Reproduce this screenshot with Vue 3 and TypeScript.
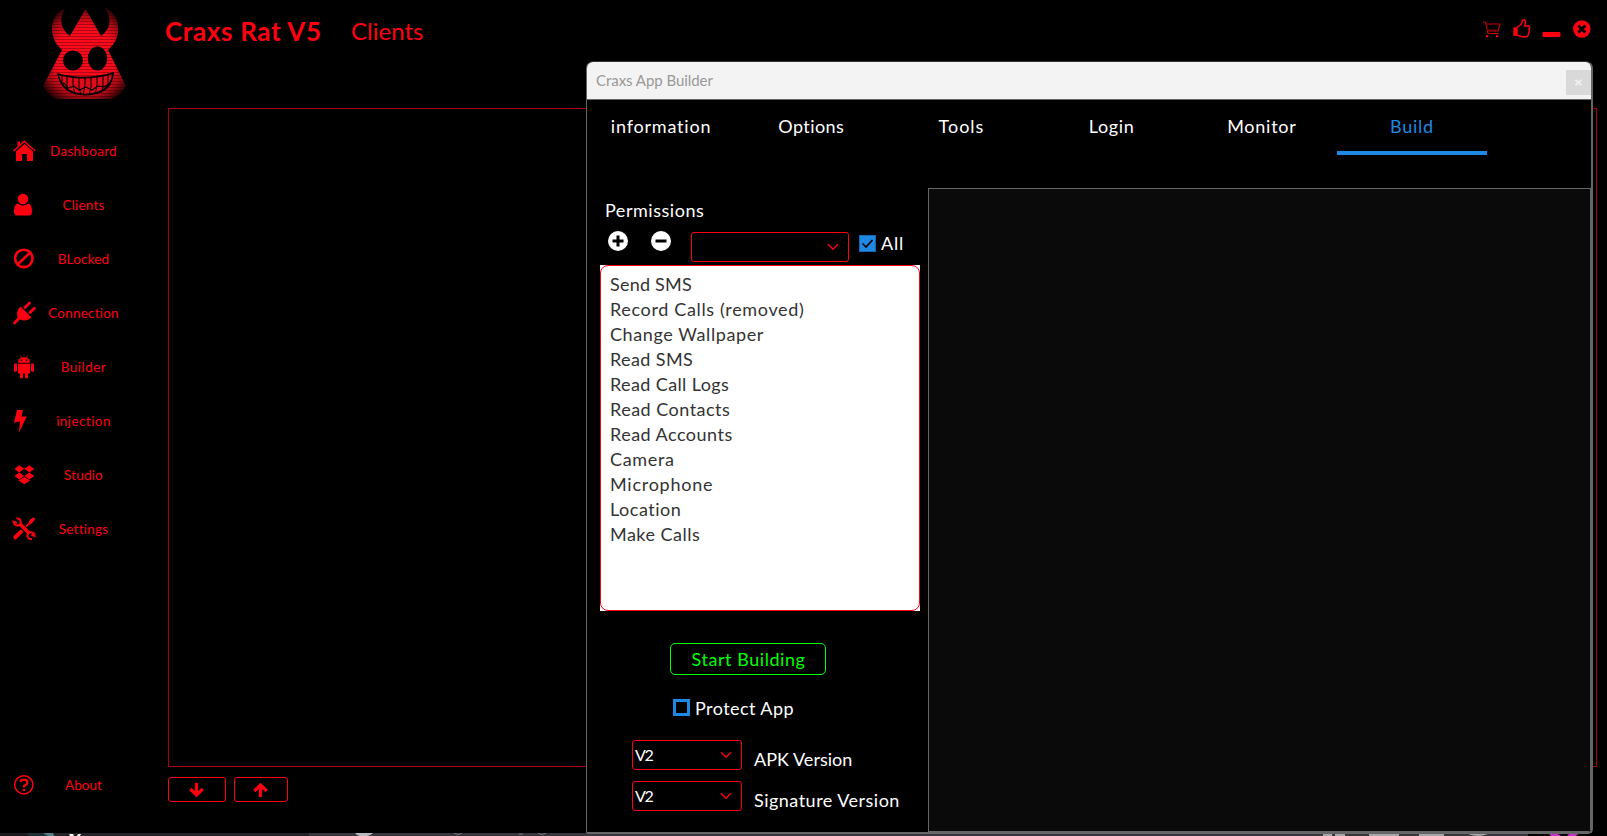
<script setup lang="ts">
interface Label { text: string; w: number }
interface NavItem extends Label { icon: string }

const ctx = document.createElement('canvas').getContext('2d')!

// Letter spacing that makes a label's ink span the given width.
function fit(text: string, width: number, size = 18, weight = 400) {
  ctx.font = `${weight} ${size}px Lato`
  const m = ctx.measureText(text)
  const ink = m.actualBoundingBoxLeft + m.actualBoundingBoxRight
  return { letterSpacing: `${((width - ink) / (text.length - 1)).toFixed(3)}px` }
}

const nav: NavItem[] = [
  { text: 'Dashboard', w: 65, icon: 'home' },
  { text: 'Clients', w: 42, icon: 'user' },
  { text: 'BLocked', w: 50, icon: 'ban' },
  { text: 'Connection', w: 70, icon: 'plug' },
  { text: 'Builder', w: 44, icon: 'android' },
  { text: 'injection', w: 54, icon: 'bolt' },
  { text: 'Studio', w: 39, icon: 'box' },
  { text: 'Settings', w: 49, icon: 'tools' },
]
const tabs: Label[] = [
  { text: 'information', w: 98 },
  { text: 'Options', w: 66 },
  { text: 'Tools', w: 45 },
  { text: 'Login', w: 43 },
  { text: 'Monitor', w: 68 },
  { text: 'Build', w: 41 },
]
const permissions: Label[] = [
  { text: 'Send SMS', w: 81 },
  { text: 'Record Calls (removed)', w: 192 },
  { text: 'Change Wallpaper', w: 154 },
  { text: 'Read SMS', w: 81 },
  { text: 'Read Call Logs', w: 118 },
  { text: 'Read Contacts', w: 119 },
  { text: 'Read Accounts', w: 122 },
  { text: 'Camera', w: 63 },
  { text: 'Microphone', w: 101 },
  { text: 'Location', w: 69 },
  { text: 'Make Calls', w: 89 },
]
const versions: Label[] = [
  { text: 'APK Version', w: 98 },
  { text: 'Signature Version', w: 145 },
]
const teeth = [62, 67, 73, 79, 85, 91, 97, 103, 108]
</script>

<template>
  <div class="desktop">
    <aside class="side">
      <svg class="logo" width="86" height="94" viewBox="41 7 86 94">
        <defs>
          <radialGradient id="glow" gradientUnits="userSpaceOnUse" cx="85" cy="56" r="52">
            <stop offset="0" stop-color="#ff0a1c" />
            <stop offset=".58" stop-color="#fa0a1c" />
            <stop offset=".8" stop-color="#a80914" />
            <stop offset="1" stop-color="#280205" />
          </radialGradient>
          <pattern id="scan" width="86" height="3" patternUnits="userSpaceOnUse">
            <rect width="86" height="1" fill="#000" opacity=".3" />
          </pattern>
          <clipPath id="mouth"><path d="M57 73Q85 81 114 72Q113 95 85 95.500Q61 95 57 73Z" /></clipPath>
          <path id="head" d="M65 8C53 14 50 25 53 36C55 43 58 46 62 50L43 86Q47 95 56 99H112Q121 95 126 86L108 50C113 45 117 41 118 32C119 20 114 11 105 8C112 18 111 29 101 36L85.500 9L70 36C60 29 59 18 65 8Z" />
        </defs>
        <use href="#head" fill="url(#glow)" />
        <use href="#head" fill="url(#scan)" />
        <ellipse cx="73" cy="60.500" rx="10" ry="10" />
        <ellipse cx="97.500" cy="58.500" rx="9.700" ry="12" />
        <path d="M57 73Q85 81 114 72Q113 95 85 95.500Q61 95 57 73Z" />
        <path d="M59 75.500Q85 82 112 74.500Q109 93 85 93.700Q64 93 59 75.500Z" fill="#e00a1a" />
        <g clip-path="url(#mouth)" fill="none" stroke="#000" stroke-width="1.100">
          <path d="M60 84L64 83L68 88L74 86L79 90L86 87L92 90L98 86L104 87L110 83" />
          <path v-for="(x, i) in teeth" :key="x" :d="`M${x} 75V${85 + (i % 2) * 2}L${x + (x < 85 ? 2 : -2)} 95`" />
        </g>
      </svg>

      <nav class="nav">
        <div v-for="n in nav" :key="n.text" class="nav-item">
          <svg class="nav-icon" width="24" height="24" viewBox="0 0 24 24">
            <g v-if="n.icon === 'home'">
              <path d="M1.500 12L12.300 2.200L23.200 12" fill="none" stroke="#ff0010" stroke-width="1.500" />
              <path d="M5.500 2.500H8V5.500L5.500 7.500ZM12.500 5L21 12.500V22H15V15H10V22H4V12.500Z" />
            </g>
            <g v-else-if="n.icon === 'user'">
              <circle cx="11" cy="6" r="5.300" />
              <path d="M5.500 10.500Q8 12.500 11 12.500T16.500 10.500Q20 11.500 20 18.500Q20 22.500 17 22.500H5Q2 22.500 2 18.500Q2 11.500 5.500 10.500Z" />
            </g>
            <g v-else-if="n.icon === 'ban'" fill="none" stroke="#ff0010" stroke-width="2.600">
              <circle cx="11.800" cy="11.400" r="8.700" /><path d="M6 17L18 5.700" />
            </g>
            <g v-else-if="n.icon === 'plug'">
              <path d="M2.500 22L6.500 17.800M13 6.500L17.500 2M18 11.500L22.300 7.200" stroke="#ff0010" stroke-width="2.800" stroke-linecap="round" />
              <path d="M8.500 5.500L19.500 16.500Q14 21 8.500 18.800L6 17.500Q3 11 8.500 5.500Z" />
            </g>
            <g v-else-if="n.icon === 'android'">
              <path d="M6 7.800Q6.200 4 9 2.800L7.900 1L8.400 .8L9.600 2.600Q12 1.900 14.400 2.600L15.600 .8L16.100 1L15 2.800Q17.800 4 18 7.800ZM6 8.700H18V18.500H16V22.200Q16 23.500 14.500 23.500T13 22.200V18.500H11V22.200Q11 23.500 9.500 23.500T8 22.200V18.500H6Z" />
              <rect x="2" y="8.300" width="3" height="8.500" rx="1.500" /><rect x="19" y="8.300" width="3" height="8.500" rx="1.500" />
              <circle cx="9.300" cy="5.300" r=".7" fill="#000" /><circle cx="14.700" cy="5.300" r=".7" fill="#000" />
            </g>
            <path v-else-if="n.icon === 'bolt'" d="M5 1H11L9.500 7.500H14.800L6.800 24L8 12.500L2 13.800Z" />
            <path v-else-if="n.icon === 'box'" d="M7.300 2.300L12.200 5.700L7.300 9.500L2.500 6ZM17.300 2.300L22.200 6L17.300 9.500L12.500 5.700ZM7.300 9.500L12.100 13L7.300 16.500L2.500 13ZM17.300 9.500L22.200 13L17.300 16.500L12.600 13ZM12.300 14L18.200 17.500L12.300 21.300L6.500 17.500Z" />
            <g v-else fill="none" stroke="#ff0010">
              <path d="M3.300 20.300L9 14.800" stroke-width="4" stroke-linecap="round" />
              <path d="M14 9.500L19 5" stroke-width="1.800" />
              <path d="M18.600 5L21.200 2.300" stroke-width="3.400" stroke-linecap="round" />
              <path d="M7.500 6.500L17.500 16.500" stroke-width="3.600" />
              <path d="M4.500 1.600Q8.700 1.200 8.700 5.200Q8.500 8.700 5.300 8.500Q2.300 8.300 1.700 4.800L5 5.800" stroke-width="2" />
              <path d="M20 22Q15.200 22.300 15.400 18.300Q15.800 15 19 15.200Q22.300 15.500 22.600 19L19.500 17.800" stroke-width="2" />
            </g>
          </svg>
          <span class="nav-text" :style="fit(n.text, n.w, 13.5)">{{ n.text }}</span>
        </div>
      </nav>

      <div class="nav-item about">
        <svg class="nav-icon" width="24" height="24" viewBox="0 0 24 24" fill="none" stroke="#ff0010">
          <circle cx="11.800" cy="11.800" r="9.100" stroke-width="1.500" />
          <path d="M8.600 9.100Q8.800 6.700 12 6.700T15.300 9.400Q15.300 11 13.500 11.800T11.800 14.500" stroke-width="2.200" />
          <path d="M10.700 16.900H13.100" stroke-width="2.200" />
        </svg>
        <span class="nav-text" :style="fit('About', 37, 13.5)">About</span>
      </div>
    </aside>

    <main class="main">
      <header class="head">
        <h1 :style="fit('Craxs Rat V5', 155, 26, 700)">Craxs Rat V5</h1>
        <h2 :style="fit('Clients', 71, 24)">Clients</h2>
        <svg class="sys" width="112" height="24" viewBox="1480 17 112 24">
          <g fill="none" stroke="#c0000c" stroke-width="1.100">
            <path d="M1483 22H1485.500L1488 33.500H1499M1486 24H1500L1498 31H1487.500" />
            <path d="M1487 30.300H1498" stroke="#7c0007" stroke-width="1.600" />
          </g>
          <path d="M1486 35.300h2.200v2h-2.200zM1496 35.300h2.200v2h-2.200z" fill="#ff0010" />
          <path d="M1517 27.500L1521 24.500Q1522.300 23 1522.200 20.500Q1524 18.800 1525.500 21Q1526 23 1524.500 26H1528.500Q1530.200 26.300 1529.200 29L1529.500 31L1528.500 34Q1528 37 1525 37Q1521 37 1517 35Z" fill="none" stroke="#ff0010" stroke-width="1.500" stroke-linejoin="round" />
          <path d="M1513.300 27.500H1517V35.800H1513.300Z" fill="#ff0010" />
          <rect x="1542.500" y="32" width="18" height="5" rx="1" fill="#ff0010" />
          <circle cx="1581.800" cy="29" r="8.700" fill="#ff0010" />
          <path d="M1578.300 25.500L1585.300 32.500M1585.300 25.500L1578.300 32.500" stroke="#000" stroke-width="2.800" />
        </svg>
      </header>
      <section class="list"></section>
      <footer class="foot">
        <button class="arrow down">
          <svg width="18" height="18" viewBox="0 0 18 18"><path d="M8.500 2V14M2.300 8L8.500 14L14.700 8" /></svg>
        </button>
        <button class="arrow up">
          <svg width="18" height="18" viewBox="0 0 18 18"><path d="M8.500 16V4M2.300 10L8.500 4L14.700 10" /></svg>
        </button>
      </footer>
    </main>

    <svg class="strip" width="1607" height="3" viewBox="0 0 1607 3">
      <rect width="1528" height="3" fill="#35353b" />
      <rect width="309" height="3" fill="#232327" />
      <rect width="28" height="3" fill="#1b1b1e" />
      <path d="M26 0H53L55 3H30Z" fill="#1f2f36" /><path d="M43 0H53L54 3H48Z" fill="#527e88" />
      <path d="M69 1H73L74 3H70ZM78 1H81L80 3H77Z" fill="#f0eee8" />
      <path d="M355 0H373Q370 3 367 3H360Q357 3 355 0Z" fill="#b9b9c2" />
      <path d="M454 0Q458 3 462 0M538 0Q542 3 546 0M519 1H523" fill="none" stroke="#77777f" />
      <path d="M1323 1h9v2h-9zM1335 1h10v2h-10zM1369 1h30v2h-30zM1419 1h25v2h-25zM1468 1Q1478 5 1488 1V0H1468Z" fill="#a5a5aa" />
      <path d="M1549 1H1558L1561 3H1551ZM1569 1H1578L1576 3H1567Z" fill="#c92fd0" />
    </svg>

    <div class="window">
      <div class="titlebar">
        <span class="title" :style="fit('Craxs App Builder', 118, 15)">Craxs App Builder</span>
        <span class="close"><svg width="9" height="9" viewBox="0 0 9 9"><path d="M1.500 1.800L7.500 7.200M7.500 1.800L1.500 7.200" stroke="#f1f1f1" stroke-width="1.800" /></svg></span>
      </div>
      <div class="tabs">
        <div v-for="t in tabs" :key="t.text" class="tab" :class="{ active: t.text === 'Build' }">
          <span :style="fit(t.text, t.w)">{{ t.text }}</span>
        </div>
      </div>
      <div class="body">
        <div class="form">
          <div class="perm-title"><span :style="fit('Permissions', 98)">Permissions</span></div>
          <div class="perm-row">
            <svg class="round" width="20" height="20" viewBox="0 0 20 20"><circle cx="10" cy="10" r="10" fill="#fff" /><path d="M4.500 10H15.500M10 4.500V15.500" stroke="#000" stroke-width="3" /></svg>
            <svg class="round minus" width="20" height="20" viewBox="0 0 20 20"><circle cx="10" cy="10" r="10" fill="#fff" /><path d="M4.500 10H15.500" stroke="#000" stroke-width="3" /></svg>
            <div class="combo wide"><svg class="chev" width="12" height="8" viewBox="0 0 12 8"><path d="M1 1.200L6 6.200L11 1.200" /></svg></div>
            <svg class="check" width="17" height="17" viewBox="0 0 17 17"><rect x=".5" y=".5" width="16" height="16" fill="#1e88e5" stroke="#1565b0" /><path d="M3.500 8.500L7 12L13.500 5" fill="none" stroke="#000" stroke-width="1.700" /></svg>
            <span class="all" :style="fit('All', 21)">All</span>
          </div>
          <div class="listbox">
            <div class="listbox-in">
              <div v-for="p in permissions" :key="p.text" class="perm"><span :style="fit(p.text, p.w)">{{ p.text }}</span></div>
            </div>
          </div>
          <button class="start"><span :style="fit('Start Building', 113)">Start Building</span></button>
          <div class="protect">
            <span class="box"></span>
            <span :style="fit('Protect App', 98)">Protect App</span>
          </div>
          <div v-for="v in versions" :key="v.text" class="version">
            <div class="combo"><span class="val" :style="fit('V2', 18.500, 16)">V2</span><svg class="chev" width="12" height="8" viewBox="0 0 12 8"><path d="M1 1.200L6 6.200L11 1.200" /></svg></div>
            <span class="vlabel" :style="fit(v.text, v.w)">{{ v.text }}</span>
          </div>
        </div>
        <div class="output"></div>
      </div>
    </div>
  </div>
</template>

<style>
body { background: #000; overflow: hidden; }
</style>

<style scoped>
* { box-sizing: border-box; }
.desktop {
  position: relative;
  display: flex;
  width: 1607px;
  height: 836px;
  background: #000;
  overflow: hidden;
  font-family: Lato, "Liberation Sans", sans-serif;
  font-size: 18px;
  color: #fff;
  white-space: nowrap;
}
.desktop svg { display: block; flex: none; }
button { background: #000; padding: 0; font: inherit; }
.side { width: 168px; height: 833px; display: flex; flex-direction: column; padding-top: 7px; }
.logo { margin-left: 41px; }
.nav { margin-top: 23px; }
.nav-item { height: 54px; display: flex; align-items: center; color: #ff0010; }
.nav-icon { margin-left: 12px; fill: #ff0010; }
.about .nav-icon { fill: none; }
.nav-text { width: 95px; text-align: center; font-size: 13.5px; line-height: 20px; }
.about { margin-top: 202px; }
.main { flex: 1; display: flex; flex-direction: column; }
.head { height: 108px; display: flex; align-items: flex-start; color: #ff0010; }
h1 { width: 183px; margin: 16px 0 0 -3px; font-size: 26px; line-height: 30px; font-weight: 700; }
h2 { margin: 16px 0 0 3px; font-size: 24px; line-height: 30px; font-weight: 400; }
.sys { margin: 17px 15px 0 auto; }
.list { height: 659px; width: 1429px; border: 1px solid #a8000e; }
.foot { display: flex; gap: 8px; margin-top: 10px; }
.arrow { height: 25px; border: 1px solid #ff0010; border-radius: 3px; display: flex; align-items: center; justify-content: center; }
.arrow path { fill: none; stroke: #ff0010; stroke-width: 3.2; }
.down { width: 58px; }
.up { width: 54px; }
.strip { position: absolute; left: 0; top: 833px; }

.window {
  position: absolute;
  left: 586px;
  top: 61px;
  width: 1007px;
  height: 773px;
  border: 1px solid #666;
  border-right-width: 2px;
  border-bottom-width: 2px;
  border-top-color: #333;
  border-radius: 7px 7px 5px 2px;
  background: #000;
  overflow: hidden;
}
.titlebar { height: 38px; background: #f3f3f3; border-bottom: 1px solid #666; display: flex; align-items: flex-start; justify-content: space-between; }
.title { color: #999; font-size: 15px; line-height: 20px; margin: 8px 0 0 9px; }
.close { width: 25px; height: 25px; margin-top: 8px; background: #d9d9d9; display: flex; align-items: center; justify-content: center; }
.tabs { height: 88px; display: flex; margin-left: -1px; }
.tab { width: 150.2px; height: 55px; padding-top: 14px; line-height: 24px; text-align: center; }
.active { color: #1e88e5; border-bottom: 4px solid #1e88e5; }
.body { height: 644px; display: flex; }
.form { width: 341px; padding-left: 13px; }
.output { flex: 1; background: #0a0a0a; border: 1px solid #666; }
.perm-title { padding: 10px 0 0 5px; line-height: 24px; height: 43px; }
.perm-row { height: 34px; display: flex; align-items: flex-start; }
.round { margin-left: 8px; }
.round.minus { margin-left: 23px; }
.combo { width: 110px; height: 30px; border: 1px solid #ff0010; border-radius: 3px; display: flex; align-items: center; justify-content: space-between; padding: 0 9px 0 2px; }
.combo.wide { width: 158px; margin: 1px 0 0 20px; }
.chev { margin-left: auto; }
.chev path { fill: none; stroke: #ff0010; stroke-width: 1.4; }
.check { margin: 4px 0 0 10px; }
.all { margin-left: 5px; line-height: 24px; }
.listbox { width: 320px; height: 346px; background: #fff; }
.listbox-in { height: 346px; border: 1px solid #ff0010; border-radius: 8px; padding: 6px 9px; color: #333; }
.perm { height: 25px; line-height: 25px; }
.start { display: block; width: 156px; height: 32px; margin: 32px 0 0 70px; border: 1px solid #0f0; border-radius: 5px; color: #0f0; line-height: 28px; padding-left: 1px; }
.protect { height: 17px; margin: 24px 0 24px 73px; display: flex; align-items: center; gap: 5px; line-height: 24px; }
.box { width: 17px; height: 17px; border: 3px solid #1e88e5; }
.version { height: 41px; margin-left: 32px; display: flex; align-items: flex-start; }
.val { font-size: 16px; line-height: 24px; }
.vlabel { margin: 7px 0 0 12px; line-height: 24px; }
</style>
